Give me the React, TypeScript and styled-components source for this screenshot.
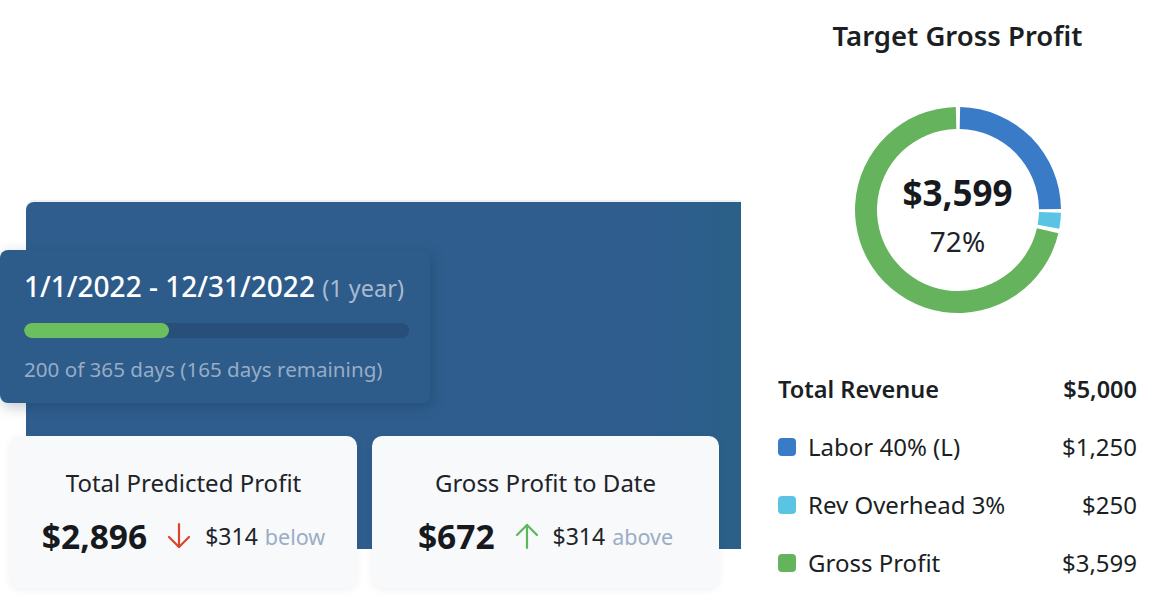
import styled, { createGlobalStyle } from "styled-components";

const GlobalStyle = createGlobalStyle`
  html, body {
    margin: 0;
    padding: 0;
    background: #ffffff;
    font-family: 'Noto Sans', 'Open Sans', sans-serif;
    color: #1b1f24;
  }
`;

const Page = styled.div`
  display: flex;
  width: 1170px;
  height: 600px;
  overflow: hidden;
`;

const LeftColumn = styled.div`
  width: 760px;
  padding-top: 202px;
  box-sizing: border-box;
`;

const BluePanel = styled.div`
  margin-left: 26px;
  width: 715px;
  height: 347px;
  background: linear-gradient(90deg, #2f5e8e 0%, #2f5e8e 88%, #2a6088 100%);
  border-top-left-radius: 8px;
  box-shadow: 0 -2px 0 #eef1f4;
  padding-top: 48px;
  box-sizing: border-box;
`;

const DateCard = styled.div`
  margin-left: -26px;
  width: 430px;
  height: 153px;
  box-sizing: border-box;
  padding: 17px 20px 0 24px;
  background: #2d5b8a;
  border-radius: 8px;
  box-shadow: 2px 4px 14px rgba(10, 30, 60, 0.25);
`;

const DateTitle = styled.div`
  color: #ffffff;
  font-size: 28px;
  line-height: 38px;
  font-weight: 500;
  white-space: nowrap;
  letter-spacing: 0;
`;

const Muted = styled.span`
  color: #a8bad0;
  font-size: 23.5px;
  font-weight: 400;
`;

const Track = styled.div`
  margin-top: 16px;
  height: 15px;
  width: 385px;
  border-radius: 8px;
  background: #284f79;
  overflow: hidden;
`;

const Fill = styled.div`
  height: 100%;
  border-radius: 8px;
  background: #6bbf5f;
`;

const DaysText = styled.div`
  margin-top: 17px;
  color: #97adc6;
  font-size: 20.6px;
  line-height: 28px;
  white-space: nowrap;
`;

const CardRow = styled.div`
  display: flex;
  gap: 15px;
  margin-left: -16px;
  margin-top: 33px;
`;

const StatCard = styled.div`
  width: 347px;
  height: 152px;
  background: #f7f9fa;
  border-radius: 10px;
  box-shadow: 0 2px 8px rgba(0, 0, 0, 0.06);
  display: flex;
  flex-direction: column;
  align-items: center;
  padding-top: 30px;
  box-sizing: border-box;
`;

const StatTitle = styled.div`
  font-size: 24px;
  line-height: 33px;
  color: #1e2329;
  white-space: nowrap;
`;

const StatLine = styled.div`
  display: flex;
  align-items: center;
  margin-top: 14px;
  height: 46px;
  white-space: nowrap;
`;

const BigValue = styled.span`
  font-size: 33.5px;
  font-weight: 700;
  color: #16191d;
  margin-right: 20px;
`;

const Delta = styled.span`
  font-size: 23px;
  color: #1e2329;
  margin-left: 14px;
`;

const Note = styled.span`
  font-size: 21.5px;
  color: #9badc5;
  margin-left: 7px;
`;

const RightColumn = styled.div`
  flex: 1;
  padding: 17px 33px 0 18px;
  display: flex;
  flex-direction: column;
  align-items: stretch;
`;

const ChartTitle = styled.div`
  text-align: center;
  font-size: 27.5px;
  line-height: 38px;
  font-weight: 600;
  color: #1b1f24;
`;

const DonutWrap = styled.div`
  position: relative;
  width: 208px;
  height: 208px;
  margin: 51px auto 0;
`;

const DonutCenter = styled.div`
  position: absolute;
  inset: 0;
  display: flex;
  flex-direction: column;
  align-items: center;
  padding-top: 63px;
  box-sizing: border-box;
`;

const CenterValue = styled.div`
  font-size: 35px;
  line-height: 48px;
  font-weight: 700;
  color: #16191d;
`;

const CenterPct = styled.div`
  font-size: 28px;
  line-height: 41px;
  font-weight: 400;
  color: #1e2329;
  margin-top: 4px;
`;

const Legend = styled.div`
  margin-top: 61px;
  display: flex;
  flex-direction: column;
  gap: 31px;
`;

const LegendRow = styled.div<{ $bold?: boolean }>`
  display: flex;
  align-items: center;
  justify-content: space-between;
  font-size: ${({ $bold }) => ($bold ? 23.5 : 24)}px;
  font-weight: ${({ $bold }) => ($bold ? 600 : 400)};
  color: #1b1f24;
  height: 27px;
  white-space: nowrap;
`;

const LegendLabel = styled.div`
  display: flex;
  align-items: center;
`;

const Swatch = styled.span<{ $color: string }>`
  width: 18px;
  height: 18px;
  border-radius: 4px;
  background: ${({ $color }) => $color};
  margin-right: 12px;
`;

const polar = (cx: number, cy: number, r: number, deg: number) => {
  const a = ((deg - 90) * Math.PI) / 180;
  return [cx + r * Math.cos(a), cy + r * Math.sin(a)];
};

const arc = (start: number, end: number) => {
  const c = 104;
  const ro = 103;
  const ri = 81;
  const [x1, y1] = polar(c, c, ro, start);
  const [x2, y2] = polar(c, c, ro, end);
  const [x3, y3] = polar(c, c, ri, end);
  const [x4, y4] = polar(c, c, ri, start);
  const large = end - start > 180 ? 1 : 0;
  return `M${x1} ${y1} A${ro} ${ro} 0 ${large} 1 ${x2} ${y2} L${x3} ${y3} A${ri} ${ri} 0 ${large} 0 ${x4} ${y4} Z`;
};

const segments = [
  { from: 1.2, to: 89.5, color: "#3a7bc8" },
  { from: 91.5, to: 100.5, color: "#5bc3e4" },
  { from: 103, to: 358.8, color: "#66b35e" },
];

const Arrow = ({ up, color }: { up: boolean; color: string }) => (
  <svg width="24" height="28" viewBox="0 0 24 28" fill="none" stroke={color} strokeWidth="2.2" strokeLinecap="round" strokeLinejoin="round">
    {up ? (
      <>
        <line x1="12" y1="26" x2="12" y2="3" />
        <polyline points="2,13 12,3 22,13" />
      </>
    ) : (
      <>
        <line x1="12" y1="2" x2="12" y2="25" />
        <polyline points="2,15 12,25 22,15" />
      </>
    )}
  </svg>
);

const App = () => {
  return (
    <Page>
      <GlobalStyle />
      <LeftColumn>
        <BluePanel>
          <DateCard>
            <DateTitle>
              1/1/2022 - 12/31/2022 <Muted>(1 year)</Muted>
            </DateTitle>
            <Track>
              <Fill style={{ width: `${(145 / 385) * 100}%` }} />
            </Track>
            <DaysText>200 of 365 days (165 days remaining)</DaysText>
          </DateCard>
          <CardRow>
            <StatCard>
              <StatTitle>Total Predicted Profit</StatTitle>
              <StatLine>
                <BigValue>$2,896</BigValue>
                <Arrow up={false} color="#d9452b" />
                <Delta>$314</Delta>
                <Note>below</Note>
              </StatLine>
            </StatCard>
            <StatCard>
              <StatTitle>Gross Profit to Date</StatTitle>
              <StatLine>
                <BigValue>$672</BigValue>
                <Arrow up={true} color="#5cb85c" />
                <Delta>$314</Delta>
                <Note>above</Note>
              </StatLine>
            </StatCard>
          </CardRow>
        </BluePanel>
      </LeftColumn>
      <RightColumn>
        <ChartTitle>Target Gross Profit</ChartTitle>
        <DonutWrap>
          <svg width="208" height="208" viewBox="0 0 208 208">
            {segments.map((s) => (
              <path key={s.color} d={arc(s.from, s.to)} fill={s.color} />
            ))}
          </svg>
          <DonutCenter>
            <CenterValue>$3,599</CenterValue>
            <CenterPct>72%</CenterPct>
          </DonutCenter>
        </DonutWrap>
        <Legend>
          <LegendRow $bold>
            <LegendLabel>Total Revenue</LegendLabel>
            <span>$5,000</span>
          </LegendRow>
          <LegendRow>
            <LegendLabel>
              <Swatch $color="#3a7bc8" />
              Labor 40% (L)
            </LegendLabel>
            <span>$1,250</span>
          </LegendRow>
          <LegendRow>
            <LegendLabel>
              <Swatch $color="#5bc3e4" />
              Rev Overhead 3%
            </LegendLabel>
            <span>$250</span>
          </LegendRow>
          <LegendRow>
            <LegendLabel>
              <Swatch $color="#66b35e" />
              Gross Profit
            </LegendLabel>
            <span>$3,599</span>
          </LegendRow>
        </Legend>
      </RightColumn>
    </Page>
  );
};

export default App;
